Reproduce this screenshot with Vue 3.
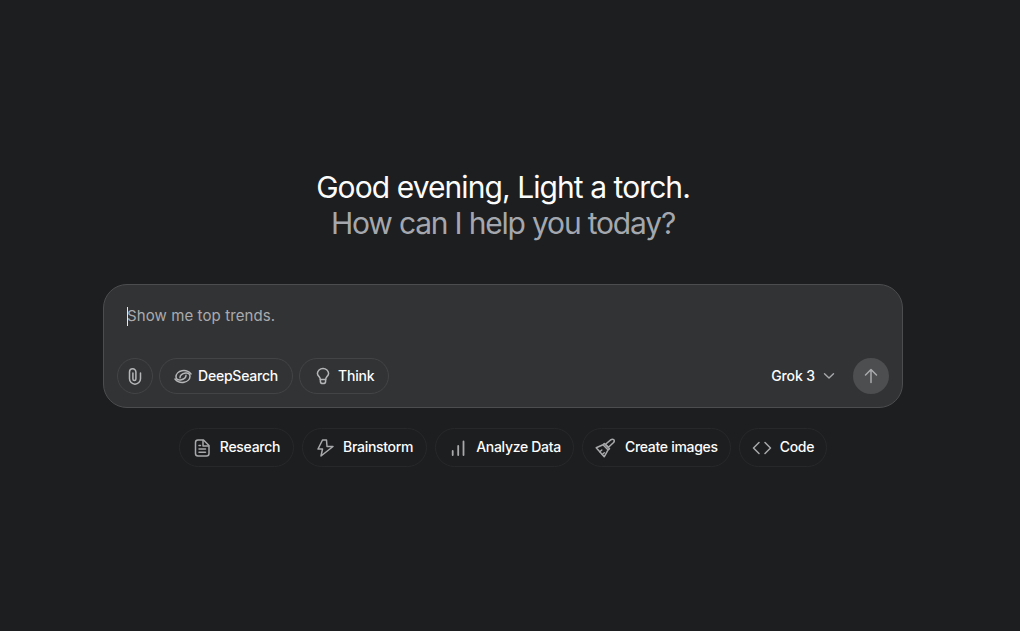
<template>
  <main class="page">
    <h1 class="greeting">
      <span class="line-main">Good evening, Light a torch.</span>
      <span class="line-sub">How can I help you today?</span>
    </h1>

    <section class="composer">
      <div class="prompt">
        <span class="caret"></span>
        <span class="placeholder">Show me top trends.</span>
      </div>
      <div class="toolbar">
        <div class="tools">
          <button class="round-btn attach" aria-label="Attach">
            <svg width="18" height="18" viewBox="0 0 18 18" fill="none" stroke="currentColor" stroke-width="1.5" stroke-linecap="round">
              <path d="M14.500 6v5.700a5.500 5.500 0 0 1-11 0V5a3.200 3.200 0 0 1 6.400 0v7a1.500 1.500 0 0 1-3 0V6" />
            </svg>
          </button>
          <button class="pill">
            <svg width="18" height="18" viewBox="0 0 18 18" fill="none" stroke="currentColor" stroke-width="1.5" stroke-linecap="round" stroke-linejoin="round">
              <path d="M17 7C14.500 4 11 3.200 8 3.700 4.500 4.300 2 7 2 9.800 2 12.200 4 13.500 6.500 13 9.500 12.400 12 10.500 12 8.300" />
              <path d="M1 12C3.500 15 7 15.800 10 15.300 13.500 14.700 16 12 16 9.200 16 6.800 14 5.500 11.500 6 8.500 6.600 6 8.500 6 10.700" />
            </svg>
            <span>DeepSearch</span>
          </button>
          <button class="pill">
            <svg width="18" height="18" viewBox="0 0 18 18" fill="none" stroke="currentColor" stroke-width="1.5" stroke-linecap="round" stroke-linejoin="round">
              <path d="M6.200 12.600v-.9c0-.7-.4-1.200-.9-1.800C4.300 9 3.400 8.100 3.400 6.600 3.400 3.700 5.900 1.500 9 1.500s5.600 2.200 5.600 5.100c0 1.500-.9 2.400-1.900 3.300-.5.600-.9 1.100-.9 1.800v.9z" />
              <path d="M6.400 12.800v1.600c0 1.200 1.100 2.100 2.600 2.100s2.600-.9 2.600-2.100v-1.600" />
            </svg>
            <span>Think</span>
          </button>
        </div>
        <div class="send-area">
          <button class="model">
            <span>Grok 3</span>
            <svg width="12" height="8" viewBox="0 0 12 8" fill="none" stroke="currentColor" stroke-width="1.4" stroke-linecap="round" stroke-linejoin="round">
              <path d="M1.500 1.800 6 6l4.500-4.200" />
            </svg>
          </button>
          <button class="send" aria-label="Send">
            <svg width="16" height="16" viewBox="0 0 16 16" fill="none" stroke="currentColor" stroke-width="1.5" stroke-linecap="round" stroke-linejoin="round">
              <path d="M8 14.500V1.500M2.500 7 8 1.500 13.500 7" />
            </svg>
          </button>
        </div>
      </div>
    </section>

    <nav class="suggestions">
      <button class="chip research">
        <svg width="20" height="20" viewBox="0 0 20 20" fill="none" stroke="currentColor" stroke-width="1.5" stroke-linecap="round" stroke-linejoin="round">
          <path d="M3.500 4.500C3.500 3.100 4.500 2 6 2h5.500L17 7.500v8C17 17 16 18 14.500 18H6c-1.500 0-2.500-1-2.500-2.500z" />
          <path d="M11 2.500V8h5.500M7 7.500h1.500M7 11h6.500M7 14.300h6.500" />
        </svg>
        <span>Research</span>
      </button>
      <button class="chip brainstorm">
        <svg width="20" height="20" viewBox="0 0 20 20" fill="none" stroke="currentColor" stroke-width="1.5" stroke-linecap="round" stroke-linejoin="round">
          <path d="M11.500 2H7.500L3 11h4.500L6 18 18 8.500h-6z" />
        </svg>
        <span>Brainstorm</span>
      </button>
      <button class="chip analyze">
        <svg width="20" height="20" viewBox="0 0 20 20" fill="none" stroke="currentColor" stroke-width="1.800" stroke-linecap="round">
          <path d="M4.700 17v-4M10.200 17V8M15.500 17V3.500" />
        </svg>
        <span>Analyze Data</span>
      </button>
      <button class="chip images">
        <svg width="20" height="20" viewBox="0 0 20 20" fill="none" stroke="currentColor" stroke-width="1.500" stroke-linecap="round" stroke-linejoin="round">
          <path d="M18.800 1.800c-.9-.9-2.200-.6-3.100.1L10.500 6.300l3 3 4.800-4.500c.8-.8 1.300-2.100.5-3z" />
          <path d="M9.300 5.500 14.500 10.700l-1.300 1.300-5.200-5.200zM8 6.800 1.200 9.800 9.200 18.800l3.300-6" />
          <path d="M4.800 13.700 6.800 12M7.300 16.500 9.300 14.800" />
        </svg>
        <span>Create images</span>
      </button>
      <button class="chip code">
        <svg width="20" height="20" viewBox="0 0 20 20" fill="none" stroke="currentColor" stroke-width="1.500" stroke-linecap="round" stroke-linejoin="round">
          <path d="M7 4.500 1.500 10 7 15.500M13 4.500l5.500 5.500-5.500 5.500" />
        </svg>
        <span>Code</span>
      </button>
    </nav>
  </main>
</template>

<script setup>
</script>

<style>
html,
body {
  margin: 0;
  background: #1d1e20;
}
</style>

<style scoped>
.page {
  height: 631px;
  box-sizing: border-box;
  padding: 169px 14px 0 0;
  display: flex;
  flex-direction: column;
  align-items: center;
  background: #1d1e20;
  font-family: Inter, "Liberation Sans", sans-serif;
  overflow: hidden;
}

.greeting {
  margin: 0;
  display: flex;
  flex-direction: column;
  align-items: center;
  font-size: 30px;
  line-height: 36px;
  font-weight: 400;
}

.line-main {
  color: #fcfcfc;
  letter-spacing: -0.93px;
}

.line-sub {
  color: #a4a8ae;
  letter-spacing: -1.19px;
}

.composer {
  box-sizing: border-box;
  width: 800px;
  height: 124px;
  margin-top: 43px;
  padding: 0 13px 13px;
  display: flex;
  flex-direction: column;
  justify-content: space-between;
  background: #323335;
  border: 1px solid #4c4d4f;
  border-radius: 24px;
}

.prompt {
  display: flex;
  align-items: center;
  height: 20px;
  margin-top: 20px;
  padding-left: 10px;
  position: relative;
}

.caret {
  position: absolute;
  left: 10px;
  top: 2px;
  width: 1px;
  height: 19px;
  background: #e8e8e8;
}

.placeholder {
  font-size: 15px;
  letter-spacing: 0.1px;
  color: #aaabad;
}

.toolbar {
  display: flex;
  justify-content: space-between;
  align-items: center;
}

.tools,
.send-area {
  display: flex;
  align-items: center;
}

.tools {
  gap: 6px;
}

button {
  font: inherit;
  background: none;
  border: none;
  padding: 0;
  color: #fcfcfc;
}

button span {
  padding-bottom: 2px;
  letter-spacing: -0.22px;
}

.round-btn {
  box-sizing: border-box;
  width: 36px;
  height: 36px;
  display: flex;
  align-items: center;
  justify-content: center;
  border: 1px solid #434446;
  border-radius: 50%;
  color: #b5b6b8;
}

.pill {
  box-sizing: border-box;
  height: 36px;
  padding: 0 14px;
  display: flex;
  align-items: center;
  gap: 6px;
  border: 1px solid #434446;
  border-radius: 18px;
  font-size: 14px;
  font-weight: 500;
}

.pill svg {
  color: #b5b6b8;
}

.send-area {
  gap: 18px;
}

.model {
  display: flex;
  align-items: center;
  gap: 8px;
  font-size: 14px;
  font-weight: 500;
}

.model span {
  letter-spacing: -0.1px;
}

.model svg {
  color: #a8a9ab;
}

.send {
  width: 36px;
  height: 36px;
  display: flex;
  align-items: center;
  justify-content: center;
  border-radius: 50%;
  background: #4d4e50;
  color: #a9aaac;
}

.suggestions {
  margin-top: 20px;
  display: flex;
  gap: 8px;
}

.chip {
  box-sizing: border-box;
  height: 39px;
  padding: 0 12px;
  display: flex;
  align-items: center;
  gap: 8px;
  border: 1px solid #27282a;
  border-radius: 20px;
  font-size: 14px;
  font-weight: 500;
}

.chip span {
  letter-spacing: -0.3px;
}

.chip.research,
.chip.brainstorm {
  padding-right: 13px;
}

.chip.images {
  gap: 10px;
}

.chip svg {
  color: #a8a9ab;
}
</style>
